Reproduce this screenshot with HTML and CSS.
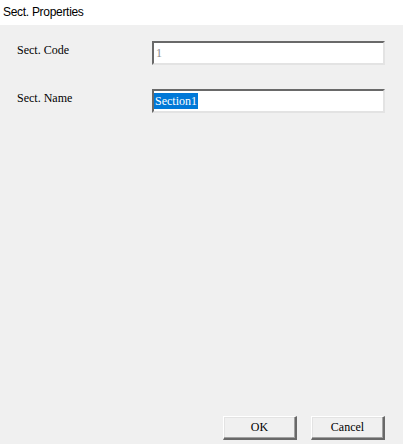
FILE: index.html
```html
<!DOCTYPE html>
<html>
<head>
<meta charset="utf-8">
<link rel="stylesheet" href="styles.css">
</head>
<body>
<div class="dialog">
  <div class="titlebar">Sect. Properties</div>
  <div class="content">
    <div class="row">
      <div class="label">Sect. Code</div>
      <div class="field"><span class="readonly">1</span></div>
    </div>
    <div class="row">
      <div class="label">Sect. Name</div>
      <div class="field"><span class="sel">Section1</span></div>
    </div>
  </div>
  <div class="footer">
    <div class="btn">OK</div>
    <div class="btn">Cancel</div>
  </div>
</div>
</body>
</html>
```
FILE: styles.css
```css
html, body {
  margin: 0;
  padding: 0;
  background: #f0f0f0;
}
.dialog {
  width: 403px;
  height: 444px;
  display: flex;
  flex-direction: column;
  overflow: hidden;
  font-family: "Liberation Serif", serif;
  font-size: 12px;
  color: #000;
}
.titlebar {
  height: 25px;
  background: #fff;
  font-family: "Liberation Sans", Arial, sans-serif;
  font-size: 12px;
  letter-spacing: -0.3px;
  line-height: 24px;
  padding-left: 3px;
  color: #000;
}
.content {
  padding: 16px 18px 0 17px;
  display: flex;
  flex-direction: column;
  gap: 24px;
}
.row {
  display: flex;
  align-items: flex-start;
}
.label {
  width: 135px;
  padding-top: 2px;
  line-height: 14px;
}
.field {
  width: 233px;
  height: 24px;
  box-sizing: border-box;
  background: #fff;
  border-top: 2px solid #696969;
  border-left: 2px solid #696969;
  border-right: 2px solid #e3e3e3;
  border-bottom: 2px solid #e3e3e3;
  padding: 2px 0 0 0;
  line-height: 16px;
}
.readonly {
  color: #8a8a8a;
  padding-left: 2px;
}
.sel {
  display: inline-block;
  background: #0078d7;
  color: #fff;
  padding: 0 1px;
  line-height: 16px;
}
.footer {
  margin-top: auto;
  display: flex;
  justify-content: flex-end;
  gap: 14px;
  padding-right: 18px;
  height: 28px;
}
.btn {
  width: 74px;
  height: 24px;
  box-sizing: border-box;
  background: #f0f0f0;
  border-top: 1px solid #fff;
  border-left: 1px solid #fff;
  border-right: 2px solid #696969;
  border-bottom: 2px solid #696969;
  box-shadow: inset -1px -1px 0 #a0a0a0, inset 1px 1px 0 #e3e3e3;
  display: flex;
  align-items: center;
  justify-content: center;
  font-size: 12px;
}
```
